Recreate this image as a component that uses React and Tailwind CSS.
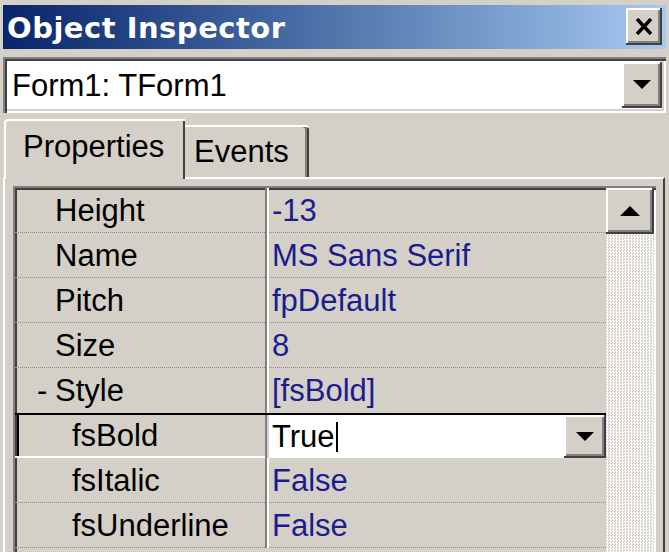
import React from 'react';

const raised = "shadow-[inset_-2px_-2px_0_#404040,inset_2px_2px_0_#ffffff,inset_-4px_-4px_0_#808080]";
const sunken = "shadow-[inset_2px_2px_0_#808080,inset_4px_4px_0_#404040,inset_-2px_-2px_0_#ffffff,inset_-4px_-4px_0_#d4d0c8]";

const rows = [
    { name: "Height", value: "-13", indent: "pl-[40px]" },
    { name: "Name", value: "MS Sans Serif", indent: "pl-[40px]" },
    { name: "Pitch", value: "fpDefault", indent: "pl-[40px]" },
    { name: "Size", value: "8", indent: "pl-[40px]" },
    { name: "Style", value: "[fsBold]", indent: "pl-[40px]", expanded: true },
    { name: "fsBold", value: "True", indent: "pl-[55px]", editing: true },
    { name: "fsItalic", value: "False", indent: "pl-[57px]" },
    { name: "fsUnderline", value: "False", indent: "pl-[57px]" },
];

function DownArrow() {
    return (
        <svg width="18" height="10" viewBox="0 0 18 10">
            <polygon points="0,0 18,0 9,9" fill="#000" />
        </svg>
    );
}

function PropRow({ row, beforeEdit }) {
    if (row.editing) {
        return (
            <div className="flex h-[45px] border-t-2 border-black">
                <div className="w-[250px] flex items-center border-b-2 border-white">
                    <div className="ml-[2px] h-full border-l-2 border-black" />
                    <span className="pl-[53px] text-black">{row.name}</span>
                </div>
                <div className="w-[4px] border-l-2 border-[#808080] bg-[#d4d0c8]" />
                <div className="flex-1 flex items-center bg-white">
                    <span className="pl-[3px] text-black">{row.value}</span>
                    <span className="ml-[1px] w-[2px] h-[30px] bg-black" />
                    <div className="flex-1" />
                    <div className={`w-[42px] h-full bg-[#d4d0c8] flex items-center justify-center ${raised}`}>
                        <DownArrow />
                    </div>
                </div>
            </div>
        );
    }
    const line = beforeEdit ? "" : "border-b border-dotted border-[#8c8c8c]";
    return (
        <div className="flex h-[45px]">
            <div className={`w-[250px] flex items-center relative ${line}`}>
                {row.expanded && <span className="absolute left-[22px] text-black">-</span>}
                <span className={`${row.indent} text-black`}>{row.name}</span>
            </div>
            <div className="w-[4px] border-l-2 border-r-2 border-l-[#808080] border-r-white" />
            <div className={`flex-1 flex items-center ${line}`}>
                <span className="pl-[3px] text-[#1c1c8e]">{row.value}</span>
            </div>
        </div>
    );
}

export default function App() {
    return (
        <div className="w-[669px] h-[552px] overflow-hidden bg-[#d4d0c8] font-['Liberation_Sans',Arial,sans-serif] pt-[5px]">
            {/* Title bar */}
            <div className="mx-[3px] h-[44px] bg-linear-to-r from-[#0a246a] to-[#a6caf0] flex items-start justify-between">
                <span className="mt-[9px] pl-[4px] font-['DejaVu_Sans',sans-serif] text-[29px] leading-[29px] tracking-[0.5px] font-bold text-white">Object Inspector</span>
                <div className={`mt-[3px] mr-[4px] w-[36px] h-[37px] bg-[#d4d0c8] flex items-center justify-center ${raised}`}>
                    <svg width="18" height="17" viewBox="0 0 18 17">
                        <path d="M2 1 L16 16 M16 1 L2 16" stroke="#000" strokeWidth="3.5" />
                    </svg>
                </div>
            </div>

            {/* Object selector */}
            <div className={`mt-[8px] mx-[3px] h-[56px] bg-white flex items-center pl-[9px] pr-[4px] ${sunken}`}>
                <span className="flex-1 text-[31px] text-black leading-none">Form1: TForm1</span>
                <div className={`w-[40px] h-[46px] bg-[#d4d0c8] flex items-center justify-center ${raised}`}>
                    <DownArrow />
                </div>
            </div>

            {/* Tabs */}
            <div className="mt-[6px] h-[58px] pl-[4px] flex items-end text-[31px] leading-[31px]">
                <div className="relative z-10 -mb-[2px] w-[181px] h-[60px] bg-[#d4d0c8] border-l-2 border-t-2 border-white rounded-tl-[4px] shadow-[inset_-2px_0_0_#404040] pt-[10px] pl-[17px] text-black">
                    Properties
                </div>
                <div className="w-[124px] h-[52px] bg-[#d4d0c8] border-t-2 border-white rounded-tr-[4px] shadow-[inset_-2px_0_0_#404040,inset_-4px_0_0_#808080] pt-[9px] pl-[9px] text-black">
                    Events
                </div>
            </div>

            {/* Tab sheet */}
            <div className="ml-[3px] mr-[4px] h-[400px] border-t-2 border-l-2 border-white border-r-2 border-r-[#404040] pt-[7px] pl-[8px] pr-[7px]">
                <div className={`h-[380px] flex p-[2px] text-[31px] leading-[31px] ${sunken}`}>
                    <div className="flex-1 flex flex-col">
                        {rows.map((row, i) => (
                            <PropRow key={i} row={row} beforeEdit={rows[i + 1] && rows[i + 1].editing} />
                        ))}
                    </div>
                    <div className="w-[48px] flex flex-col">
                        <div className={`h-[46px] bg-[#d4d0c8] flex items-center justify-center ${raised}`}>
                            <svg width="20" height="10" viewBox="0 0 20 10">
                                <polygon points="10,0 20,10 0,10" fill="#000" />
                            </svg>
                        </div>
                        <div className="flex-1 bg-[repeating-conic-gradient(#ffffff_0_25%,#d4d0c8_0_50%)] bg-[length:3px_3px]" />
                    </div>
                </div>
            </div>
        </div>
    );
}
